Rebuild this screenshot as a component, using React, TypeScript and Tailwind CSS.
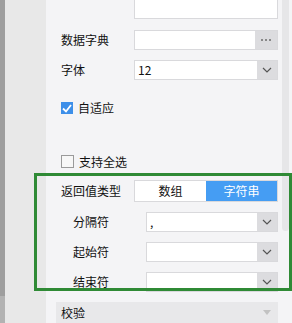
import React from "react";

const font = { fontFamily: '"Noto Sans CJK SC", "Noto Sans", sans-serif' };

function Chevron() {
  return (
    <svg width="10" height="6" viewBox="0 0 10 6" fill="none">
      <path d="M1 1 L5 5 L9 1" stroke="#555" strokeWidth="1.2" />
    </svg>
  );
}

function Select({ value, w }: { value?: string; w: string }) {
  return (
    <div className={`flex h-[20px] ${w} border border-[#d9d9dc] bg-white`}>
      <div className="flex-1 pl-[3px] text-[12px] leading-[18px] text-[#111]">{value}</div>
      <div className="flex w-[20px] items-center justify-center bg-[#dcdcdf]">
        <Chevron />
      </div>
    </div>
  );
}

function Check({ on }: { on?: boolean }) {
  return on ? (
    <div className="flex h-[12px] w-[12px] items-center justify-center bg-[#3d8fe9]">
      <svg width="10" height="9" viewBox="0 0 10 9" fill="none">
        <path d="M1 4.5 L4 7.5 L9 1" stroke="#fff" strokeWidth="1.8" />
      </svg>
    </div>
  ) : (
    <div className="h-[13px] w-[13px] border border-[#9a9a9a] bg-[#f7f7f7]" />
  );
}

export default function App() {
  return (
    <div className="relative flex h-[323px] w-[292px] overflow-hidden text-[#111]" style={font}>
      <div className="flex w-[5px] flex-col bg-[#9e9e9e]">
        <div className="h-[296px]" />
        <div className="flex-1 bg-[#b2b2b2]" />
      </div>
      <div className="w-[41px] bg-[#e8e8e8]" />

      <div className="flex w-[246px] flex-col bg-[#f4f4f6] pl-[15px] text-[12px]">
        <div className="flex">
          <div className="w-[73px]" />
          <div className="h-[19px] w-[144px] border border-t-0 border-[#d9d9dc] bg-white" />
        </div>

        <div className="mt-[11px] flex items-center">
          <div className="w-[73px]">数据字典</div>
          <div className="flex h-[20px] w-[144px] border border-[#d9d9dc] bg-white">
            <div className="flex-1" />
            <div className="flex w-[22px] items-center justify-center gap-[2px] bg-[#dcdcdf]">
              <span className="h-[2px] w-[2px] bg-[#888]" />
              <span className="h-[2px] w-[2px] bg-[#888]" />
              <span className="h-[2px] w-[2px] bg-[#888]" />
            </div>
          </div>
        </div>

        <div className="mt-[10px] flex items-center">
          <div className="w-[73px]">字体</div>
          <Select value="12" w="w-[144px]" />
        </div>

        <div className="mt-[22px] flex h-[12px] items-center gap-[5px]">
          <Check on />
          <span>自适应</span>
        </div>

        <div className="mt-[41px] flex h-[13px] items-center gap-[5px]">
          <Check />
          <span>支持全选</span>
        </div>

        <div className="mt-[12px] flex items-center">
          <div className="w-[73px]">返回值类型</div>
          <div className="flex h-[22px] w-[144px] border border-[#d9d9dc] bg-white">
            <div className="flex w-[71px] items-center justify-center">数组</div>
            <div className="flex flex-1 items-center justify-center bg-[#459df3] text-white">字符串</div>
          </div>
        </div>

        <div className="mt-[10px] flex flex-col gap-[10px] pl-[12px]">
          <div className="flex items-center">
            <div className="w-[73px]">分隔符</div>
            <Select value="," w="w-[132px]" />
          </div>
          <div className="flex items-center">
            <div className="w-[73px]">起始符</div>
            <Select w="w-[132px]" />
          </div>
          <div className="flex items-center">
            <div className="w-[73px]">结束符</div>
            <Select w="w-[132px]" />
          </div>
        </div>

        <div className="mt-[10px] ml-[-5px] flex h-[22px] w-[222px] items-center justify-between bg-[#e8e8ea] pl-[5px] pr-[6px]">
          <span>校验</span>
          <svg width="10" height="6" viewBox="0 0 10 6">
            <path d="M1 0 L9 0 L5 5 Z" fill="#c2c2c2" />
          </svg>
        </div>
      </div>

      <div className="absolute left-[282px] top-0 h-[231px] w-[7px] rounded-b-[4px] bg-[#e6e6e8]" />
      <div className="absolute left-[34px] top-[173px] h-[118px] w-[258px] border-[3px] border-[#2f8a35]" />
    </div>
  );
}
